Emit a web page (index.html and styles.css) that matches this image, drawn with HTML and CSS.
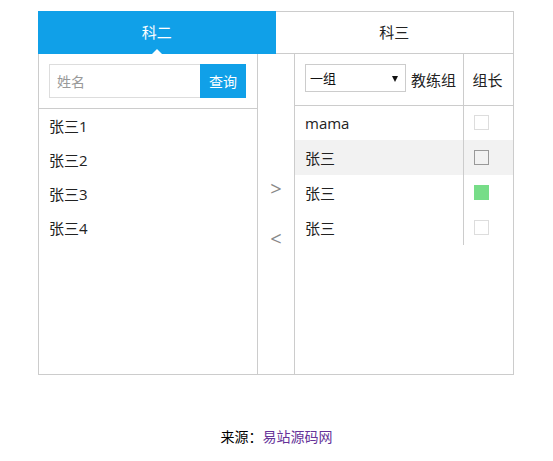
FILE: index.html
```html
<!DOCTYPE html>
<html lang="zh">
<head>
<meta charset="utf-8">
<title>分组</title>
<link rel="stylesheet" href="styles.css">
</head>
<body>
<div class="box">
  <div class="tabs">
    <div class="tab active">科二</div>
    <div class="tab">科三</div>
  </div>
  <div class="panels">
    <div class="left">
      <div class="search">
        <input class="search-input" type="text" placeholder="姓名">
        <button class="search-btn" type="button">查询</button>
      </div>
      <ul class="names">
        <li>张三1</li>
        <li>张三2</li>
        <li>张三3</li>
        <li>张三4</li>
      </ul>
    </div>
    <div class="middle">
      <div class="arrow">&gt;</div>
      <div class="arrow">&lt;</div>
    </div>
    <div class="right">
      <table class="group">
        <thead>
          <tr>
            <th class="col-name">
              <div class="head-cell">
                <span class="select-wrap">
                  <select class="select">
                    <option>一组</option>
                    <option>二组</option>
                  </select>
                </span>
                <span class="head-label">教练组</span>
              </div>
            </th>
            <th class="col-lead">组长</th>
          </tr>
        </thead>
        <tbody>
          <tr><td class="col-name">mama</td><td class="col-lead"><span class="chk"></span></td></tr>
          <tr class="hover"><td class="col-name">张三</td><td class="col-lead"><span class="chk dark"></span></td></tr>
          <tr><td class="col-name">张三</td><td class="col-lead"><span class="chk on"></span></td></tr>
          <tr><td class="col-name">张三</td><td class="col-lead"><span class="chk"></span></td></tr>
        </tbody>
      </table>
    </div>
  </div>
</div>
<p class="footer">来源：<a class="footer-link" href="#">易站源码网</a></p>
</body>
</html>
```

FILE: styles.css
```css
* { box-sizing: border-box; }

body {
  margin: 0;
  padding-top: 11px;
  font-family: "Open Sans", "Noto Sans CJK SC", sans-serif;
  color: #333;
  background: #fff;
}

.box {
  width: 476px;
  margin: 0 0 0 38px;
}

.tabs {
  display: flex;
  height: 43px;
  border: 1px solid #ccc;
}

.tab {
  flex: 1;
  text-align: center;
  font-size: 15px;
  line-height: 41px;
  color: #222;
}

.tab.active {
  position: relative;
  margin: -1px 0 -1px -1px;
  line-height: 43px;
  background: #10a0e8;
  color: #fff;
}

.tab.active::after {
  content: "";
  position: absolute;
  left: 50%;
  bottom: 0;
  margin-left: -5px;
  border-left: 5px solid transparent;
  border-right: 5px solid transparent;
  border-bottom: 5px solid #fff;
}

.panels {
  display: flex;
  height: 321px;
  border: 1px solid #ccc;
  border-top: none;
}

.left {
  width: 219px;
  border-right: 1px solid #ccc;
}

.search {
  display: flex;
  height: 55px;
  padding: 10px 10px 0;
  border-bottom: 1px solid #ccc;
}

.search-input {
  width: 151px;
  height: 34px;
  margin: 0;
  padding: 0 7px;
  border: 1px solid #ddd;
  border-right: none;
  font: 14px "Open Sans", "Noto Sans CJK SC", sans-serif;
  color: #333;
  outline: none;
}

.search-input::placeholder { color: #999; }

.search-btn {
  width: 46px;
  height: 34px;
  margin: 0;
  padding: 0;
  border: none;
  background: #10a0e8;
  color: #fff;
  font: 14px "Open Sans", "Noto Sans CJK SC", sans-serif;
}

.names {
  list-style: none;
  margin: 0;
  padding: 0;
}

.names li {
  height: 34px;
  line-height: 34px;
  padding-left: 10px;
  font-size: 15px;
  color: #222;
}

.middle {
  width: 37px;
  border-right: 1px solid #ccc;
  display: flex;
  flex-direction: column;
  justify-content: center;
  align-items: center;
}

.arrow {
  height: 50px;
  line-height: 50px;
  font-size: 20px;
  color: #888;
}

.right {
  flex: 1;
}

.group {
  width: 100%;
  border-collapse: collapse;
}

.group th {
  height: 51px;
  padding: 0;
  text-align: left;
  font-weight: normal;
  font-size: 15px;
  color: #222;
  border-bottom: 1px solid #ccc;
  vertical-align: top;
}

.group th.col-lead {
  padding: 0 0 0 9px;
  vertical-align: middle;
}

.head-cell {
  display: flex;
  align-items: center;
  padding: 10px 0 0 10px;
  gap: 5px;
}

.select-wrap {
  position: relative;
  display: block;
  width: 101px;
  height: 28px;
}

.select-wrap::after {
  content: "";
  position: absolute;
  right: 8px;
  top: 12px;
  border-left: 3px solid transparent;
  border-right: 3px solid transparent;
  border-top: 6px solid #111;
  pointer-events: none;
}

.select {
  appearance: none;
  -webkit-appearance: none;
  display: block;
  width: 101px;
  height: 28px;
  margin: 0;
  padding: 0 4px;
  border: 1px solid #ccc;
  border-radius: 0;
  background: #fff;
  font: 13px "Open Sans", "Noto Sans CJK SC", sans-serif;
  color: #111;
}

.head-label {
  font-size: 15px;
  padding-top: 3px;
}

.group td {
  height: 35px;
  padding: 0 0 0 10px;
  font-size: 15px;
  color: #222;
}

.group .col-name {
  width: 168px;
  border-right: 1px solid #ccc;
}

.group tr.hover td { background: #f2f2f2; }

.chk {
  display: block;
  width: 15px;
  height: 15px;
  border: 1px solid #ddd;
  background: #fff;
}

.chk.dark {
  border-color: #999;
  background: #f2f2f2;
}

.chk.on {
  border-color: #77dd88;
  background: #77dd88;
}

.footer {
  margin: 51px 0 0;
  text-align: center;
  font-size: 14px;
  line-height: 20px;
  color: #000;
  font-family: "Noto Sans CJK SC", sans-serif;
}

.footer-link {
  color: #663399;
  text-decoration: none;
}
```
